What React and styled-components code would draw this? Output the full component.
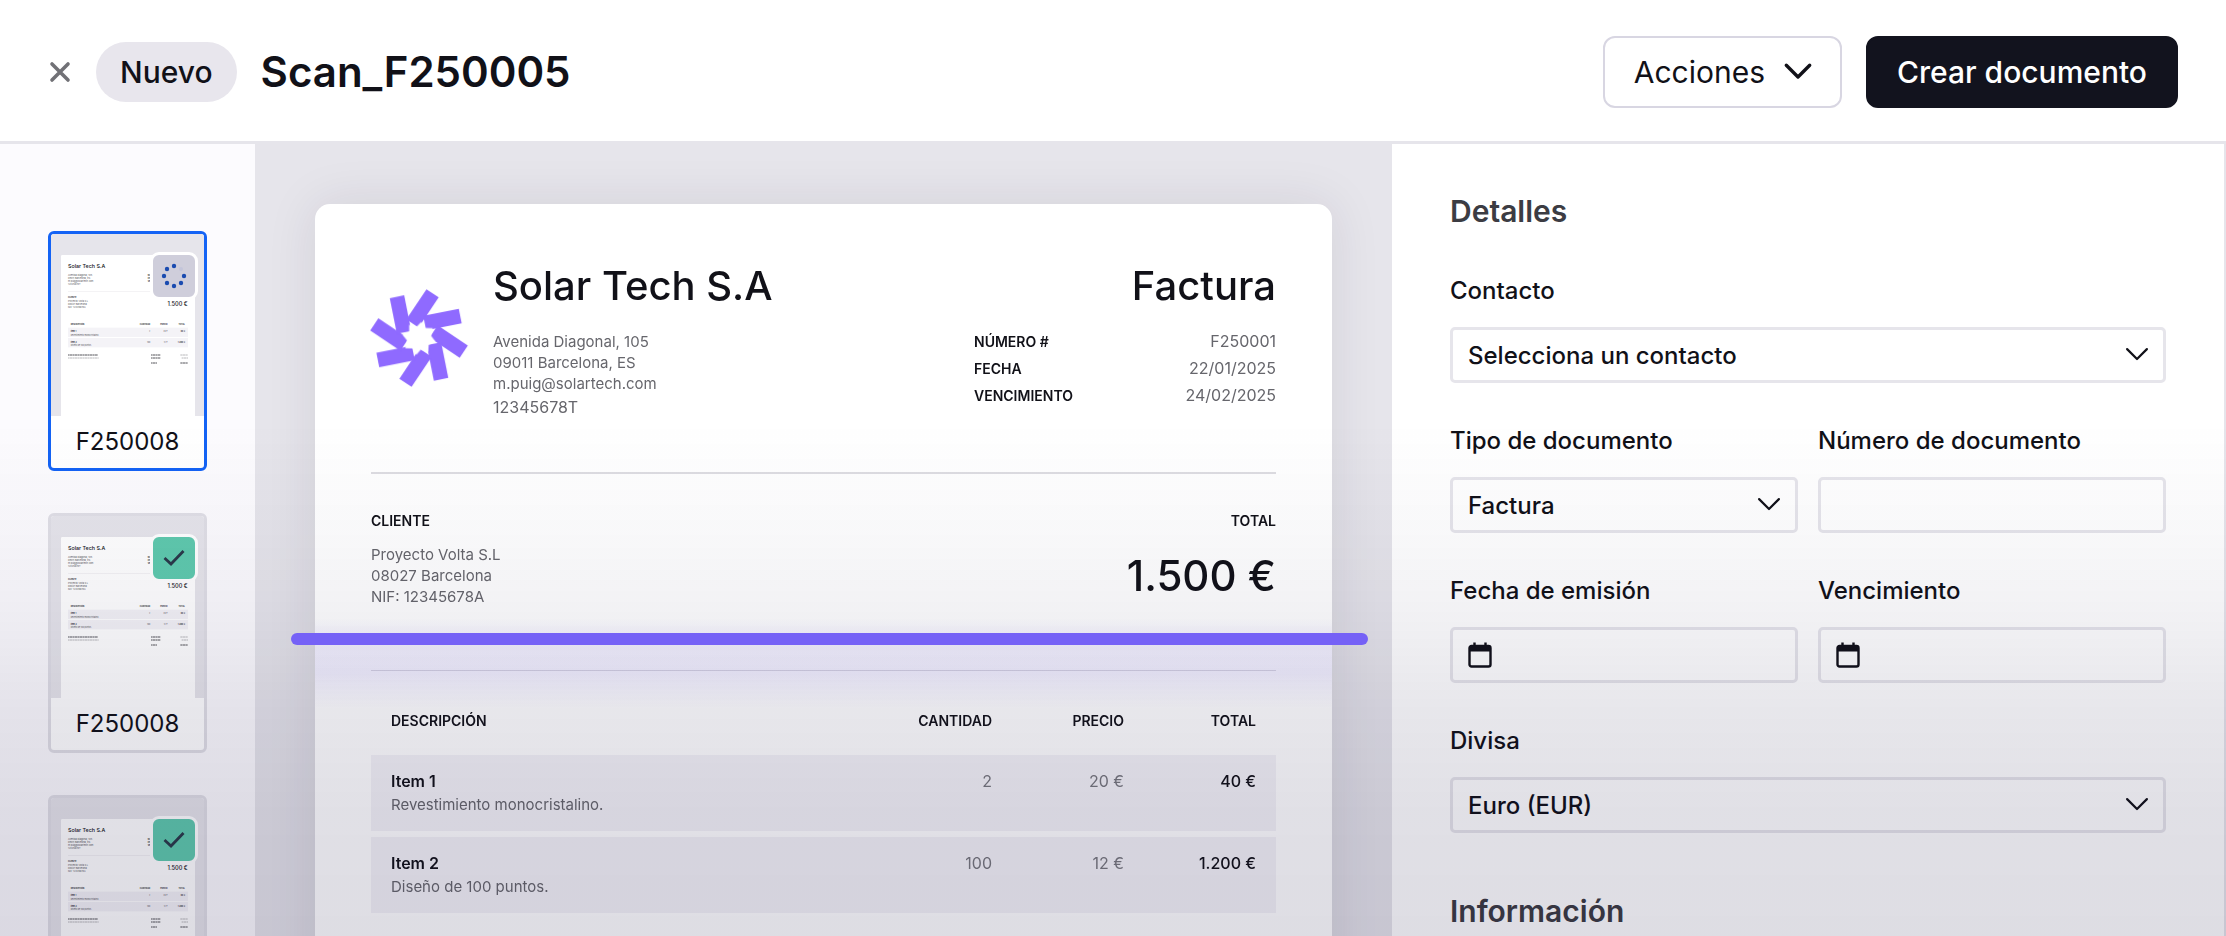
import React from 'react';
import styled, { createGlobalStyle } from 'styled-components';

const GlobalStyle = createGlobalStyle`
  * {
    box-sizing: border-box;
  }
  body {
    margin: 0;
    font-family: Inter, 'Liberation Sans', sans-serif;
    color: #111118;
    background: #ffffff;
  }
  h1, h2, p, dl, dd {
    margin: 0;
  }
  button, input, select {
    font-family: inherit;
    color: inherit;
  }
`

const Shell = styled.div`
  position: relative;
  display: flex;
  flex-direction: column;
  height: 100vh;
  overflow: hidden;
`
// darkens everything towards the bottom, the scan line stays above it
const Shade = styled.div`
  position: absolute;
  inset: 0;
  z-index: 1;
  pointer-events: none;
  background: linear-gradient(
    to bottom,
    rgba(20, 15, 60, 0) 45%,
    rgba(20, 15, 60, 0.03) 58%,
    rgba(20, 15, 60, 0.06) 66%,
    rgba(20, 15, 60, 0.1) 76%,
    rgba(20, 15, 60, 0.13) 87%,
    rgba(20, 15, 60, 0.14) 100%
  );
`

/* header */
const Header = styled.header`
  display: flex;
  align-items: center;
  justify-content: space-between;
  flex: none;
  padding: 36px 48px 33px;
  border-bottom: 3px solid #e6e5eb;
`
const HeaderGroup = styled.div`
  display: flex;
  align-items: center;
  gap: 24px;
`
const CloseButton = styled.button`
  display: flex;
  padding: 0;
  border: none;
  background: none;
  color: #717176;
`
const Badge = styled.span`
  padding: 12px 24px;
  border-radius: 30px;
  font-size: 30px;
  font-weight: 500;
  line-height: 36px;
  background: #e8e6ed;
`
const Title = styled.h1`
  font-size: 42px;
  font-weight: 600;
  line-height: 48px;
`
const Button = styled.button`
  display: flex;
  align-items: center;
  gap: 20px;
  height: 72px;
  padding: 0 29px;
  border: 2px solid ${props => (props.$primary ? '#12131e' : '#d8d6e2')};
  border-radius: 12px;
  font-size: 30px;
  font-weight: ${props => (props.$primary ? 500 : 400)};
  color: ${props => (props.$primary ? '#ffffff' : '#111118')};
  background: ${props => (props.$primary ? '#12131e' : '#ffffff')};
`

/* columns */
const Columns = styled.div`
  display: grid;
  grid-template-columns: 255px minmax(0, 1137fr) minmax(0, 834fr);
  flex: 1;
  min-height: 0;
`
const Sidebar = styled.aside`
  display: flex;
  flex-direction: column;
  gap: 42px;
  padding: 87px 48px 0;
  background: #fcfbfe;
`
const Thumb = styled.a`
  position: relative;
  flex: none;
  border: 3px solid ${props => (props.$active ? '#1463f5' : '#e0dfe6')};
  border-radius: 6px;
  overflow: hidden;
  color: inherit;
  text-decoration: none;
  background: #ffffff;
`
const ThumbImage = styled.div`
  display: flex;
  justify-content: center;
  height: 182px;
  padding-top: 21px;
  overflow: hidden;
  background: #e6e5eb;
`
const ThumbName = styled.div`
  font-size: 24px;
  line-height: 52px;
  text-align: center;
`
const Status = styled.span`
  position: absolute;
  top: 18px;
  right: 6px;
  display: flex;
  align-items: center;
  justify-content: center;
  width: 48px;
  height: 48px;
  border: 3px solid #ffffff;
  border-radius: 9px;
  background: ${props => (props.$done ? '#5fcaae' : '#cfcedb')};
`

/* invoice */
const Canvas = styled.main`
  position: relative;
  padding: 60px;
  overflow: hidden;
  background: #e6e5eb;
`
const Page = styled.article`
  position: relative;
  min-height: 1200px;
  padding: 58px 56px;
  border-radius: 15px;
  background: #ffffff;
  box-shadow: 0 0 50px rgba(40, 30, 60, 0.1);
`
const ScanLine = styled.div`
  position: absolute;
  z-index: 2;
  top: 489px;
  left: 36px;
  right: 24px;
  height: 12px;
  border-radius: 6px;
  background: #7561f6;
`
const ScanGlow = styled.div`
  position: absolute;
  top: 415px;
  left: 0;
  right: 0;
  height: 90px;
  background: linear-gradient(
    to bottom,
    rgba(118, 97, 246, 0) 0%,
    rgba(118, 97, 246, 0.09) 25%,
    rgba(118, 97, 246, 0.1) 60%,
    rgba(118, 97, 246, 0) 100%
  );
`
const Row = styled.div`
  display: flex;
  align-items: flex-start;
  justify-content: space-between;
`
const Company = styled.div`
  display: flex;
  gap: 26px;
`
const LogoMark = styled.svg`
  width: 96px;
  height: 96px;
  margin-top: 28px;
  overflow: visible;
`
const Display = styled.div`
  font-size: 40px;
  font-weight: 500;
  line-height: 48px;
  text-align: ${props => props.$align || 'left'};
`
const Address = styled.p`
  margin-top: ${props => props.$gap}px;
  font-size: 15px;
  line-height: 21px;
  color: #66666c;
`
const TaxId = styled.p`
  margin-top: 3px;
  font-size: 16px;
  line-height: 21px;
  color: #66666c;
`
const Meta = styled.dl`
  display: grid;
  grid-template-columns: auto auto;
  justify-content: space-between;
  width: 302px;
  margin-top: 18px;
  line-height: 27px;
`
const MetaName = styled.dt`
  font-size: 14px;
  font-weight: 600;
`
const MetaValue = styled.dd`
  font-size: 16px;
  text-align: right;
  color: #66666c;
`
const Rule = styled.hr`
  height: ${props => props.$size}px;
  margin: ${props => props.$space};
  border: none;
  background: #dddce1;
`
const Caption = styled.div`
  font-size: 14px;
  font-weight: 600;
  line-height: 20px;
  text-align: ${props => props.$align || 'left'};
`
const Amount = styled(Display)`
  margin-top: 21px;
  font-size: 42px;
`
const Items = styled.table`
  width: 100%;
  table-layout: fixed;
  border-spacing: 0 6px;
`
const HeadCell = styled.th`
  width: ${props => (props.$wide ? 'auto' : '132px')};
  padding: 34px 20px 18px;
  font-size: 14px;
  font-weight: 600;
  line-height: 20px;
  white-space: nowrap;
  text-align: ${props => (props.$wide ? 'left' : 'right')};
`
const Cell = styled.td`
  padding: 14px 20px;
  font-size: 16px;
  font-weight: ${props => (props.$strong ? 500 : 400)};
  line-height: 24px;
  vertical-align: top;
  text-align: ${props => (props.$wide ? 'left' : 'right')};
  color: ${props => (props.$strong ? '#111118' : '#77777d')};
  background: #f4f3f7;
`
const ItemName = styled.div`
  font-weight: 600;
  color: #111118;
`
const ItemText = styled.div`
  font-size: 15px;
  color: #66666c;
`

/* form */
const Panel = styled.form`
  padding: 49px 58px 0;
  overflow: hidden;
  border-right: 2px solid #e6e5eb;
`
const Heading = styled.h2`
  margin: ${props => (props.$next ? '60px' : '0')} 0 46px;
  font-size: 30px;
  font-weight: 600;
  line-height: 36px;
  color: #3c3c43;
`
const Fields = styled.div`
  display: grid;
  grid-template-columns: 1fr 1fr;
  gap: 42px 20px;
`
const FieldBox = styled.div`
  display: flex;
  flex-direction: column;
  gap: 20px;
  grid-column: ${props => (props.$full ? '1 / -1' : 'auto')};
`
const Label = styled.label`
  font-size: 24px;
  font-weight: 500;
  line-height: 32px;
`
const Control = styled.div`
  position: relative;
  height: 56px;
`
const Input = styled.input`
  width: 100%;
  height: 100%;
  padding: 0 15px 0 ${props => (props.$icon ? '54px' : '15px')};
  border: 3px solid #e6e5eb;
  border-radius: 5px;
  font-size: 24px;
  background: transparent;
`
const Select = styled.select`
  width: 100%;
  height: 100%;
  padding: 0 15px;
  border: 3px solid #e6e5eb;
  border-radius: 5px;
  font-size: 24px;
  font-weight: 500;
  appearance: none;
  background: transparent;
`
const ControlIcon = styled.span`
  position: absolute;
  top: 0;
  bottom: 0;
  ${props => props.$side}: 18px;
  display: flex;
  align-items: center;
  pointer-events: none;
`

const Chevron = ({ width, stroke }) => (
  <svg width={width} height={width * 0.6} viewBox="0 0 20 12" fill="none" overflow="visible">
    <path d="M1 1l9 9 9-9" stroke="currentColor" strokeWidth={stroke} strokeLinecap="round" strokeLinejoin="round" />
  </svg>
)

const Cross = () => (
  <svg width="24" height="24" viewBox="0 0 24 24" fill="none">
    <path d="M4 4l16 16M20 4L4 20" stroke="currentColor" strokeWidth="3.6" strokeLinecap="round" />
  </svg>
)

const Calendar = () => (
  <svg width="24" height="26" viewBox="0 0 24 26" fill="none">
    <path d="M6.5 0.5v5M17.5 0.5v5" stroke="#111118" strokeWidth="2.4" />
    <rect x="1.5" y="4" width="21" height="20.5" rx="2" stroke="#111118" strokeWidth="2.4" />
    <rect x="1.5" y="4" width="21" height="5.5" fill="#111118" />
  </svg>
)

const Logo = () => (
  <LogoMark viewBox="-147 -147 294 294">
    <mask id="star" maskUnits="userSpaceOnUse" x="-160" y="-160" width="320" height="320">
      <rect x="-160" y="-160" width="320" height="320" fill="#fff" />
      <path
        fill="#000"
        d="M7-49L17-31 42-30 37-7 50 11 30 20 28 43 6 35-8 51-18 32-42 31-36 8-50-9-30-18-30-41-8-34z"
      />
    </mask>
    <g fill="#8f6aff" mask="url(#star)">
      {[0, 1, 2, 3, 4, 5, 6, 7].map(i => (
        <rect key={i} x="-64" y="-137" width="45" height="111" transform={`rotate(${33.7 + i * 45})`} />
      ))}
    </g>
  </LogoMark>
)

const Check = () => (
  <svg width="24" height="20" viewBox="0 0 24 20" fill="none">
    <path d="M2.5 10l6.5 6L21.5 3" stroke="#2b3a4a" strokeWidth="2.8" />
  </svg>
)

const spinnerDots = [[12, 2], [5, 5], [2, 12], [5, 19], [12, 22], [19, 19], [22, 12]]

const Spinner = () => (
  <svg width="24" height="24" viewBox="0 0 24 24" overflow="visible">
    {spinnerDots.map(([x, y]) => (
      <circle key={`${x}-${y}`} cx={x} cy={y} r="2.2" fill="#1a4bb0" />
    ))}
    <circle cx="19" cy="5" r="2" fill="#c3c5da" />
  </svg>
)

// tiny preview of the invoice
const Preview = () => (
  <svg width="134" height="168" viewBox="0 0 402 504" fontFamily="Inter, sans-serif" fill="#55555b">
    <rect width="402" height="520" rx="4" fill="#ffffff" />
    <g fill="#111118" fontWeight="500">
      <text x="21" y="40" fontSize="16">Solar Tech S.A</text>
      <text x="380" y="154" fontSize="17" textAnchor="end">1.500 €</text>
    </g>
    <g fontSize="7">
      <text x="21" y="63">Avenida Diagonal, 105</text>
      <text x="21" y="71">09011 Barcelona, ES</text>
      <text x="21" y="80">m.puig@solartech.com</text>
      <text x="21" y="89">12345678T</text>
      <text x="21" y="142">Proyecto Volta S.L</text>
      <text x="21" y="151">08027 Barcelona</text>
      <text x="21" y="160">NIF: 12345678A</text>
    </g>
    <rect x="21" y="109" width="360" height="1" fill="#dddce1" />
    <rect x="21" y="218" width="360" height="28" fill="#f4f3f7" />
    <rect x="21" y="249" width="360" height="28" fill="#f4f3f7" />
    <g fontSize="6" fontWeight="600" fill="#111118">
      <text x="260" y="63">NÚMERO #</text>
      <text x="260" y="71">FECHA</text>
      <text x="260" y="80">VENCIMIENTO</text>
      <text x="21" y="130">CLIENTE</text>
      <text x="381" y="130" textAnchor="end">TOTAL</text>
      <text x="29" y="209">DESCRIPCIÓN</text>
      <text x="268" y="209" textAnchor="end">CANTIDAD</text>
      <text x="320" y="209" textAnchor="end">PRECIO</text>
      <text x="372" y="209" textAnchor="end">TOTAL</text>
      <text x="29" y="232">Item 1</text>
      <text x="372" y="232" textAnchor="end">40 €</text>
      <text x="29" y="263">Item 2</text>
      <text x="372" y="263" textAnchor="end">1.200 €</text>
    </g>
    <g fontSize="6">
      <text x="29" y="242">Revestimiento monocristalino.</text>
      <text x="268" y="232" textAnchor="end">2</text>
      <text x="320" y="232" textAnchor="end">20 €</text>
      <text x="29" y="273">Diseño de 100 puntos.</text>
      <text x="268" y="263" textAnchor="end">100</text>
      <text x="320" y="263" textAnchor="end">12 €</text>
    </g>
    <g stroke="#55555b" strokeWidth="3" strokeDasharray="5 1 8 1">
      <path d="M21 300h90M270 300h28M270 309h28M270 324h18M358 324h23" />
      <path d="M21 309h92M358 300h23M362 309h19" opacity="0.4" />
    </g>
  </svg>
)

const scans = [
  { id: 1, name: 'F250008', active: true },
  { id: 2, name: 'F250008', done: true },
  { id: 3, name: 'F250008', done: true },
]

const items = [
  { name: 'Item 1', text: 'Revestimiento monocristalino.', amount: '2', price: '20 €', total: '40 €' },
  { name: 'Item 2', text: 'Diseño de 100 puntos.', amount: '100', price: '12 €', total: '1.200 €' },
]

const SelectField = ({ id, label, option, full }) => (
  <FieldBox $full={full}>
    <Label htmlFor={id}>{label}</Label>
    <Control>
      <Select id={id}>
        <option>{option}</option>
      </Select>
      <ControlIcon $side="right"><Chevron width={22} stroke={2} /></ControlIcon>
    </Control>
  </FieldBox>
)

const InputField = ({ id, label, icon }) => (
  <FieldBox>
    <Label htmlFor={id}>{label}</Label>
    <Control>
      <Input id={id} type="text" $icon={icon} />
      {icon && <ControlIcon $side="left"><Calendar /></ControlIcon>}
    </Control>
  </FieldBox>
)

const Invoice = () => (
  <Page>
    <ScanGlow />
    <Row>
      <Company>
        <Logo />
        <div>
          <Display>Solar Tech S.A</Display>
          <Address $gap={21}>
            Avenida Diagonal, 105<br />
            09011 Barcelona, ES<br />
            m.puig@solartech.com
          </Address>
          <TaxId>12345678T</TaxId>
        </div>
      </Company>
      <div>
        <Display $align="right">Factura</Display>
        <Meta>
          <MetaName>NÚMERO #</MetaName>
          <MetaValue>F250001</MetaValue>
          <MetaName>FECHA</MetaName>
          <MetaValue>22/01/2025</MetaValue>
          <MetaName>VENCIMIENTO</MetaName>
          <MetaValue>24/02/2025</MetaValue>
        </Meta>
      </div>
    </Row>
    <Rule $size={2} $space="54px 0 37px" />
    <Row>
      <div>
        <Caption>CLIENTE</Caption>
        <Address $gap={13}>
          Proyecto Volta S.L<br />
          08027 Barcelona<br />
          NIF: 12345678A
        </Address>
      </div>
      <div>
        <Caption $align="right">TOTAL</Caption>
        <Amount $align="right">1.500 €</Amount>
      </div>
    </Row>
    <Rule $size={1} $space="63px 0 0" />
    <Items>
      <thead>
        <tr>
          <HeadCell $wide>DESCRIPCIÓN</HeadCell>
          <HeadCell>CANTIDAD</HeadCell>
          <HeadCell>PRECIO</HeadCell>
          <HeadCell>TOTAL</HeadCell>
        </tr>
      </thead>
      <tbody>
        {items.map(item => (
          <tr key={item.name}>
            <Cell $wide>
              <ItemName>{item.name}</ItemName>
              <ItemText>{item.text}</ItemText>
            </Cell>
            <Cell>{item.amount}</Cell>
            <Cell>{item.price}</Cell>
            <Cell $strong>{item.total}</Cell>
          </tr>
        ))}
      </tbody>
    </Items>
  </Page>
)

const App = () => (
  <Shell>
    <GlobalStyle />
    <Header>
      <HeaderGroup>
        <CloseButton type="button" aria-label="Cerrar"><Cross /></CloseButton>
        <Badge>Nuevo</Badge>
        <Title>Scan_F250005</Title>
      </HeaderGroup>
      <HeaderGroup>
        <Button type="button">Acciones <Chevron width={26} stroke={2.6} /></Button>
        <Button type="button" $primary>Crear documento</Button>
      </HeaderGroup>
    </Header>
    <Columns>
      <Sidebar>
        {scans.map(scan => (
          <Thumb key={scan.id} href={`#scan-${scan.id}`} $active={scan.active}>
            <ThumbImage><Preview /></ThumbImage>
            <Status $done={scan.done}>{scan.done ? <Check /> : <Spinner />}</Status>
            <ThumbName>{scan.name}</ThumbName>
          </Thumb>
        ))}
      </Sidebar>
      <Canvas>
        <Invoice />
        <ScanLine />
      </Canvas>
      <Panel>
        <Heading>Detalles</Heading>
        <Fields>
          <SelectField id="contacto" label="Contacto" option="Selecciona un contacto" full />
          <SelectField id="tipo" label="Tipo de documento" option="Factura" />
          <InputField id="numero" label="Número de documento" />
          <InputField id="emision" label="Fecha de emisión" icon />
          <InputField id="vencimiento" label="Vencimiento" icon />
          <SelectField id="divisa" label="Divisa" option="Euro (EUR)" full />
        </Fields>
        <Heading $next>Información</Heading>
      </Panel>
    </Columns>
    <Shade />
  </Shell>
)

export default App;
